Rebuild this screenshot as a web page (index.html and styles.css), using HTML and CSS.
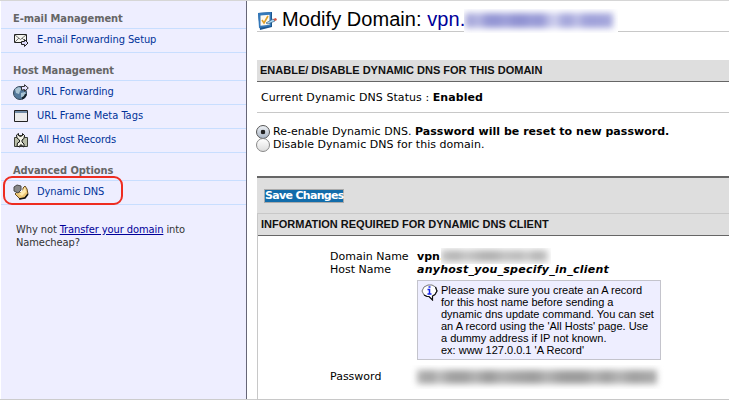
FILE: index.html
```html
<!DOCTYPE html>
<html lang="en">
<head>
<meta charset="utf-8">
<title>Modify Domain</title>
<link rel="stylesheet" href="styles.css">
</head>
<body>
<div class="page">
<nav class="sidebar">
  <h2 class="group"><span>E-mail Management</span></h2>
  <a class="item">
    <svg width="16" height="16" viewBox="0 0 16 16"><path d="M1.500 2.500h12v8h-12z" fill="#f4f4ee" stroke="#222"/><path d="M2 3l5.500 4.500L13 3M2 10l4-4M13 10L9 6" fill="none" stroke="#555" stroke-width=".8"/><path d="M8.500 9.500h3v-2l3.500 3.500-3.500 3.500v-2h-3z" fill="#dcd8fa" stroke="#222"/></svg>
    <span>E-mail Forwarding Setup</span></a>
  <h2 class="group"><span>Host Management</span></h2>
  <a class="item">
    <svg width="16" height="16" viewBox="0 0 16 16"><circle cx="7" cy="9" r="6.500" fill="#55799b" stroke="#344657"/><path d="M2 5l4-2 3 2-2 2-1 3-3-1zM8 9l4-1 1 2-3 4-2-1z" fill="#a9c3d2"/><path d="M9 14.500a6 6 0 0 0 4-4.500" stroke="#15212c" stroke-width="2" fill="none"/><path d="M8.500 6V2.500h3V.7L15.300 4l-3.800 3.300V5.500h-1V6z" fill="#e6e3ff" stroke="#333"/></svg>
    <span>URL Forwarding</span></a>
  <a class="item">
    <svg width="16" height="16" viewBox="0 0 16 16"><path d="M1.500 2.500h13v11h-13z" fill="#ebebeb" stroke="#222"/><path d="M2 3h12v2H2z" fill="#718ba5"/></svg>
    <span class="wide">URL Frame Meta Tags</span></a>
  <a class="item">
    <svg width="16" height="16" viewBox="0 0 16 16"><path d="M1.500 5.500h3v-2h7v2h3v9h-13z" fill="#b9bda7" stroke="#3d4038"/><path d="M5.500 1.500v2l2 1 2-1v-2l2 2-.5 3L9 8v2l2 2v3l-2-1v-1H7v2l-3-1 .5-3L6.500 10V8L4 6l-.5-3z" fill="#f4f4e7" stroke="#171717"/></svg>
    <span>All Host Records</span></a>
  <h2 class="group"><span>Advanced Options</span></h2>
  <a class="item marked">
    <svg width="16" height="16" viewBox="0 0 16 16"><path d="M5 7l3 2 2-2V4l2-2 2 3 1 5-4 4-4 1-5-5z" fill="#edc675" stroke="#684c20"/><path d="M10 6l2-3 1 5-4 4-3-2" fill="#ffe9ad"/><path d="M1 3l3-2 4 1v4L5 9 1 7z" fill="#888" stroke="#484848"/><path d="M6 15l6-1 3-4" fill="none" stroke="#111" stroke-width="1.500"/></svg>
    <span>Dynamic DNS</span></a>
  <p class="transfer"><span>Why not <a>Transfer your domain</a> into</span><br><span>Namecheap?</span></p>
</nav>
<main class="main">
  <h1 class="title">
    <svg width="21" height="20" viewBox="0 0 21 20"><path d="M1 2l14-1v15L3 19z" fill="#1c568f"/><path d="M1 2l13-1v14L2 17z" fill="#3478b9"/><path d="M3.500 4.500l9-.7v10l-9 1z" fill="#fffaf0"/><path d="M5 9l2 3 4-7" fill="none" stroke="#e0a128" stroke-width="1.600"/><path d="M9 12l7-4 2 2-7 3z" fill="#a9d4ef" stroke="#34658b" stroke-width=".7"/><path d="M16 8l3-1 1 2-2 1z" fill="#d75441"/></svg>
    <span class="heading">Modify Domain: <span class="domain">vpn.</span></span><span class="veil veil-title"><i></i></span>
  </h1>
  <h3 class="bar">ENABLE/ DISABLE DYNAMIC DNS FOR THIS DOMAIN</h3>
  <p class="status"><span>Current Dynamic DNS Status : </span><b>Enabled</b></p>
  <div class="choices">
    <div class="choice"><span class="radio on"></span><span>Re-enable Dynamic DNS. </span><b>Password will be reset to new password.</b></div>
    <div class="choice"><span class="radio"></span><span>Disable Dynamic DNS for this domain.</span></div>
  </div>
  <div class="save"><span class="button"><b>Save Changes</b></span></div>
  <section class="info">
    <h3 class="bar">INFORMATION REQUIRED FOR DYNAMIC DNS CLIENT</h3>
    <div class="fields">
      <span>Domain Name</span><div class="value"><b>vpn.</b><span class="veil veil-name"><i></i></span></div>
      <span>Host Name</span><b class="host">anyhost_you_specify_in_client</b>
      <div class="note">
        <svg width="17" height="17" viewBox="0 0 17 17"><path d="M6 12.500l-3-1.500-2-4 2-4 4-2h4l3.500 2L16 7l-2 3.500-2.500 1.500v4l-3.500-3.500z" fill="#fff" stroke="#777"/><path d="M14.500 3L16 7l-2 3.500-2.500 1.500v4L8 12.500H6L3 11" fill="none" stroke="#111" stroke-width="1.200"/><path d="M6.500 5.500h2V10M6.500 10h4M7.500 3h2" fill="none" stroke="#1725e8" stroke-width="1.500"/></svg>
        <p><span>Please make sure you create an A record</span><br><span>for this host name before sending a</span><br><span>dynamic dns update command. You can set</span><br><span>an A record using the 'All Hosts' page. Use</span><br><span>a dummy address if IP not known.</span><br><span>ex: www 127.0.0.1 'A Record'</span></p>
      </div>
      <span class="password">Password</span><div class="veil veil-pass"><i></i></div>
    </div>
  </section>
</main>
</div>
</body>
</html>
```
FILE: styles.css
```css
*, ::after { box-sizing: border-box; margin: 0; padding: 0; }
body { width: 729px; height: 401px; overflow: hidden; background: #fff; font: 11px/13px "DejaVu Sans", sans-serif; color: #000; }
span { white-space: nowrap; }
svg { flex: none; display: block; }
.page { display: flex; height: 400px; border-top: 1px solid #d6d6d6; border-bottom: 1px solid #ccc; }
.sidebar { width: 246px; margin-left: 1px; background: #eeeeff; border-right: 1px solid #666677; font-family: "DejaVu Sans Condensed", "DejaVu Sans", sans-serif; font-stretch: condensed; letter-spacing: -.08px; }
.group { height: 28px; padding: 11px 0 0 12px; border-top: 1px solid #c8deff; font-size: 11px; line-height: 13px; letter-spacing: -.07px; color: #666; }
.group:first-child { height: 27px; border-top: 0; }
.item { display: flex; gap: 8px; height: 24px; padding: 3px 0 0 12px; border-top: 1px solid #c8deff; color: #039; line-height: 15px; position: relative; }
.wide { letter-spacing: 0; }
.marked { height: 25px; border-bottom: 1px solid #c8deff; }
.marked::after { content: ""; position: absolute; left: 2px; top: -5px; width: 120px; height: 29px; border: 2px solid #ee2c20; border-radius: 9px; }
.transfer { padding: 18px 0 0 15px; color: #333; }
.transfer a { color: #009; text-decoration: underline; }
.main { flex: 1; padding-left: 10px; }
.title { display: flex; height: 31px; border-bottom: 1px solid #c8c8c8; font: 20px/24px "Liberation Sans", sans-serif; }
.title svg { margin-top: 10px; }
.heading { margin: 6px 0 0 4px; width: 182px; letter-spacing: .05px; }
.domain { color: #009; }
.veil { display: block; background: #fff; overflow: hidden; flex: none; }
.veil i { display: block; filter: blur(3px); }
.veil-title { width: 154px; height: 24px; margin-top: 8px; }
.veil-title i { height: 15px; margin: 4px 5px 0 1px; background: linear-gradient(90deg, #a9aadc 0 8px, #b9bae4 14px, #9496d4 22px 34px, #a0a2da 40px, #9092d2 50px 58px, #9c9ed8 66px, #9496d4 76px, #bcbde6 84px, #d2d3ef 90px, #a6a8dc 98px 106px, #c0c1e8 112px, #a0a2da 120px 132px, #a8aadd 100%); }
.bar { height: 22px; background: #dedede; border-bottom: 1px solid #666; padding: 4px 0 0 3px; font: bold 11px/13px "Liberation Sans", sans-serif; color: #111; }
.title + .bar { margin-top: 28px; }
.status { height: 31px; padding: 9px 0 0 4px; border-bottom: 1px solid #c8c8c8; white-space: pre; letter-spacing: .07px; }
.status span, .choice span { white-space: pre; }
.choices { padding-top: 12px; height: 63px; }
.choice { display: flex; height: 13px; margin-left: -1px; letter-spacing: .03px; }
.radio { width: 14px; height: 14px; flex: none; border-radius: 50%; border: 1px solid #888; background: linear-gradient(#fff, #ddd); margin-right: 3px; }
.on { background: radial-gradient(circle at 50%, #222 0 2px, transparent 2.600px), linear-gradient(#eef1f5, #a9b5c5); border-color: #555; }
.save { height: 37px; padding: 11px 0 0 7px; background: #dedede; border-top: 2px solid #666; }
.button { display: block; width: 80px; height: 14px; background: #126caa; border: 1px solid #aaa; color: #fff; font-size: 11px; line-height: 12px; letter-spacing: -.68px; }
.info { height: 187px; border: 1px solid #c8c8c8; border-right: 0; }
.fields { display: grid; grid-template-columns: 87px 1fr; grid-template-rows: 13px 13px 91px 20px; padding: 14px 0 0 72px; }
.value { display: flex; }
.value b { width: 24px; }
.veil-name { width: 110px; height: 16px; margin-top: -2px; padding-top: 1px; }
.veil-name i { height: 12px; margin: 1px 3px 0 0; background: linear-gradient(90deg, #c4c4c4, #b4b4b4 14px, #c8c8c8 26px, #b2b2b2 42px 54px, #c4c4c4 64px, #bbb 78px, #ccc 86px, #b4b4b4 96px, #c8c8c8 100%); }
.host { font-style: italic; letter-spacing: .26px; }
.note { grid-column: 2; width: 244px; height: 80px; margin-top: 4px; border: 1px solid #c4c4cc; background: #eeeeff; display: flex; padding: 3px 0 0 3px; font: 11px/12px "Liberation Sans", sans-serif; }
.note p { margin-left: 3px; }
.password { padding-top: 3px; }
.veil-pass { width: 254px; height: 24px; margin-left: -7px; margin-top: -2px; }
.veil-pass i { height: 14px; margin: 5px 7px; background: linear-gradient(90deg, #b4b4b4, #a4a4a4 14px, #c0c0c0 22px, #a0a0a0 34px 48px, #b4b4b4 58px, #999 72px, #b0b0b0 84px, #a4a4a4 100px, #9c9c9c 118px, #b4b4b4 130px, #9c9c9c 146px 166px, #b2b2b2 178px, #a0a0a0 190px, #b6b6b6 202px, #a0a0a0 216px, #acacac 100%); }
```
